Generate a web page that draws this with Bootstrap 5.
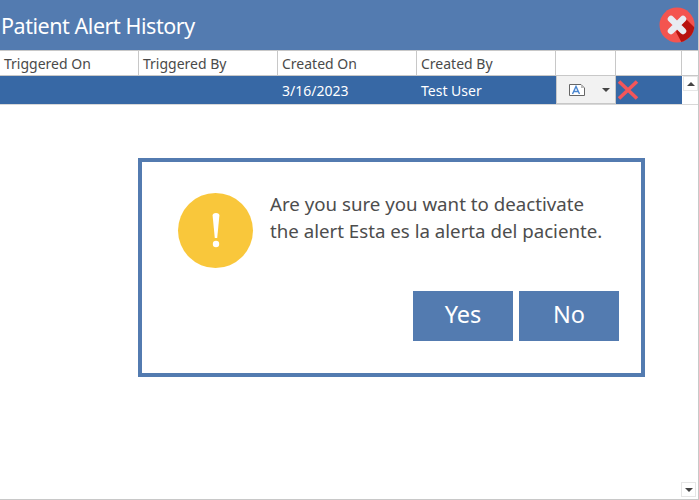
<!DOCTYPE html>
<html>
<head>
<meta charset="utf-8">
<title>Patient Alert History</title>
<link href="https://cdn.jsdelivr.net/npm/bootstrap@5.3.3/dist/css/bootstrap.min.css" rel="stylesheet">
<style>
  html, body { height: 100%; margin: 0; overflow: hidden; }
  body { font-family: "Noto Sans", "Open Sans", sans-serif; background: #fff; color: #444; }
  .page-wrap { width: 699px; height: 500px; border-right: 1px solid #c8c8c8; border-bottom: 1px solid #c8c8c8; position: relative; }
  .title-bar { height: 50px; background: #537bb0; color: #fff; padding-left: 1px; padding-right: 3px; font-size: 21.5px; letter-spacing: -.45px; }
  .title-text { padding-top: 3px; }
  .grid-head { height: 26px; border-top: 1px solid #c8c8c8; border-bottom: 1px solid #c8c8c8; font-size: 14px; }
  .grid-row { height: 29px; border-bottom: 1px solid #d8d8d8; font-size: 14px; }
  .cell { width: 139px; flex: none; padding-left: 4px; border-right: 1px solid #c8c8c8; line-height: 26px; white-space: nowrap; color: #4a4a4a; }
  .cell-menu { width: 60px; flex: none; border-right: 1px solid #c8c8c8; }
  .cell-del { width: 66px; flex: none; border-right: 1px solid #c8c8c8; }
  .row-fill { width: 682px; flex: none; background: #3768a5; color: #fff; height: 28px; }
  .row-cell { width: 139px; flex: none; padding-left: 4px; line-height: 30px; white-space: nowrap; }
  .row-menu { width: 60px; height: 28px; flex: none; background: #f2f2f2; border: 1px solid #c8c8c8; border-top: 0; }
  .file-icon { margin-left: 12px; }
  .caret-icon { margin-right: 5px; }
  .del-wrap { margin-left: 1px; }
  .scroll-btn { width: 15px; height: 15px; border: 1px solid #e6e6e6; background: #fff; }
  .scroll-top { margin-left: 1px; }
  .scroll-bottom { position: absolute; right: 2px; bottom: 2px; }
  .dialog-box { position: absolute; left: 138px; top: 158px; width: 507px; height: 219px; background: #fff; border: 4px solid #537bb0; }
  .warn-circle { width: 75px; height: 75px; border-radius: 50%; background: #f9c73b; flex: none; margin-left: 36px; margin-top: 31px; }
  .dialog-text { font-size: 18.7px; line-height: 27px; margin-left: 17px; margin-top: 28px; color: #4d4d4d; white-space: nowrap; }
  .dialog-btn { width: 100px; height: 50px; background: #537bb0; color: #fff; border: 0; border-radius: 0; font-size: 23.5px; padding: 0 0 4px; line-height: 46px; }
  .dialog-btn:hover { background: #537bb0; color: #fff; }
  .btn-line { padding-right: 22px; margin-top: 23px; gap: 6px; }
</style>
</head>
<body>
<div class="page-wrap">
  <div class="title-bar d-flex align-items-center justify-content-between">
    <span class="title-text">Patient Alert History</span>
    <svg width="36" height="36" viewBox="0 0 36 36">
      <defs><clipPath id="closeClip"><circle cx="18" cy="18" r="17.5"/></clipPath></defs>
      <circle cx="18" cy="18" r="17.5" fill="#f4544f"/>
      <polygon clip-path="url(#closeClip)" points="17,25 25,10 40,25 40,40 25,40" fill="#b8120e"/>
      <path d="M12 12 L24 24 M24 12 L12 24" stroke="#e8ecf2" stroke-width="6.5" stroke-linecap="round"/>
    </svg>
  </div>

  <div class="grid-head d-flex">
    <div class="cell">Triggered On</div>
    <div class="cell">Triggered By</div>
    <div class="cell">Created On</div>
    <div class="cell">Created By</div>
    <div class="cell-menu"></div>
    <div class="cell-del"></div>
  </div>

  <div class="grid-row d-flex">
    <div class="row-fill d-flex">
      <div class="row-cell"></div>
      <div class="row-cell"></div>
      <div class="row-cell">3/16/2023</div>
      <div class="row-cell">Test User</div>
      <div class="row-menu d-flex align-items-center">
        <svg class="file-icon" width="16" height="12" viewBox="0 0 16 12">
          <path d="M.5.5H12L15.5 4V11.5H.5Z" fill="#fff" stroke="#666"/>
          <path d="M12 .5V4H15.5Z" fill="#bbb"/>
          <path d="M3.5 10L7 2.5L10.5 10M5 7.5H9" fill="none" stroke="#4a86d0" stroke-width="1.4"/>
        </svg>
        <svg class="caret-icon ms-auto" width="8" height="4" viewBox="0 0 8 4"><path d="M0 0H8L4 4Z" fill="#444"/></svg>
      </div>
      <div class="del-wrap d-flex align-items-center">
        <svg width="22" height="20" viewBox="0 0 22 20"><path d="M2 1.5L20 18.5M20 1.5L2 18.5" stroke="#f4565a" stroke-width="3.6"/></svg>
      </div>
    </div>
    <div class="scroll-btn scroll-top d-flex align-items-center justify-content-center">
      <svg width="8" height="4" viewBox="0 0 8 4"><path d="M0 4H8L4 0Z" fill="#444"/></svg>
    </div>
  </div>

  <div class="scroll-btn scroll-bottom d-flex align-items-center justify-content-center">
    <svg width="8" height="4" viewBox="0 0 8 4"><path d="M0 0H8L4 4Z" fill="#444"/></svg>
  </div>

  <div class="dialog-box">
    <div class="d-flex">
      <div class="warn-circle d-flex align-items-center justify-content-center">
        <svg width="10" height="36" viewBox="0 0 10 36">
          <path d="M1.6 2.5a3.4 2.5 0 0 1 6.8 0L6.2 25H3.8Z" fill="#fff"/>
          <circle cx="5" cy="31" r="3.2" fill="#fff"/>
        </svg>
      </div>
      <div class="dialog-text">Are you sure you want to deactivate<br>the alert Esta es la alerta del paciente.</div>
    </div>
    <div class="btn-line d-flex justify-content-end">
      <button type="button" class="btn dialog-btn">Yes</button>
      <button type="button" class="btn dialog-btn">No</button>
    </div>
  </div>
</div>
<script src="https://cdn.jsdelivr.net/npm/bootstrap@5.3.3/dist/js/bootstrap.bundle.min.js"></script>
</body>
</html>
